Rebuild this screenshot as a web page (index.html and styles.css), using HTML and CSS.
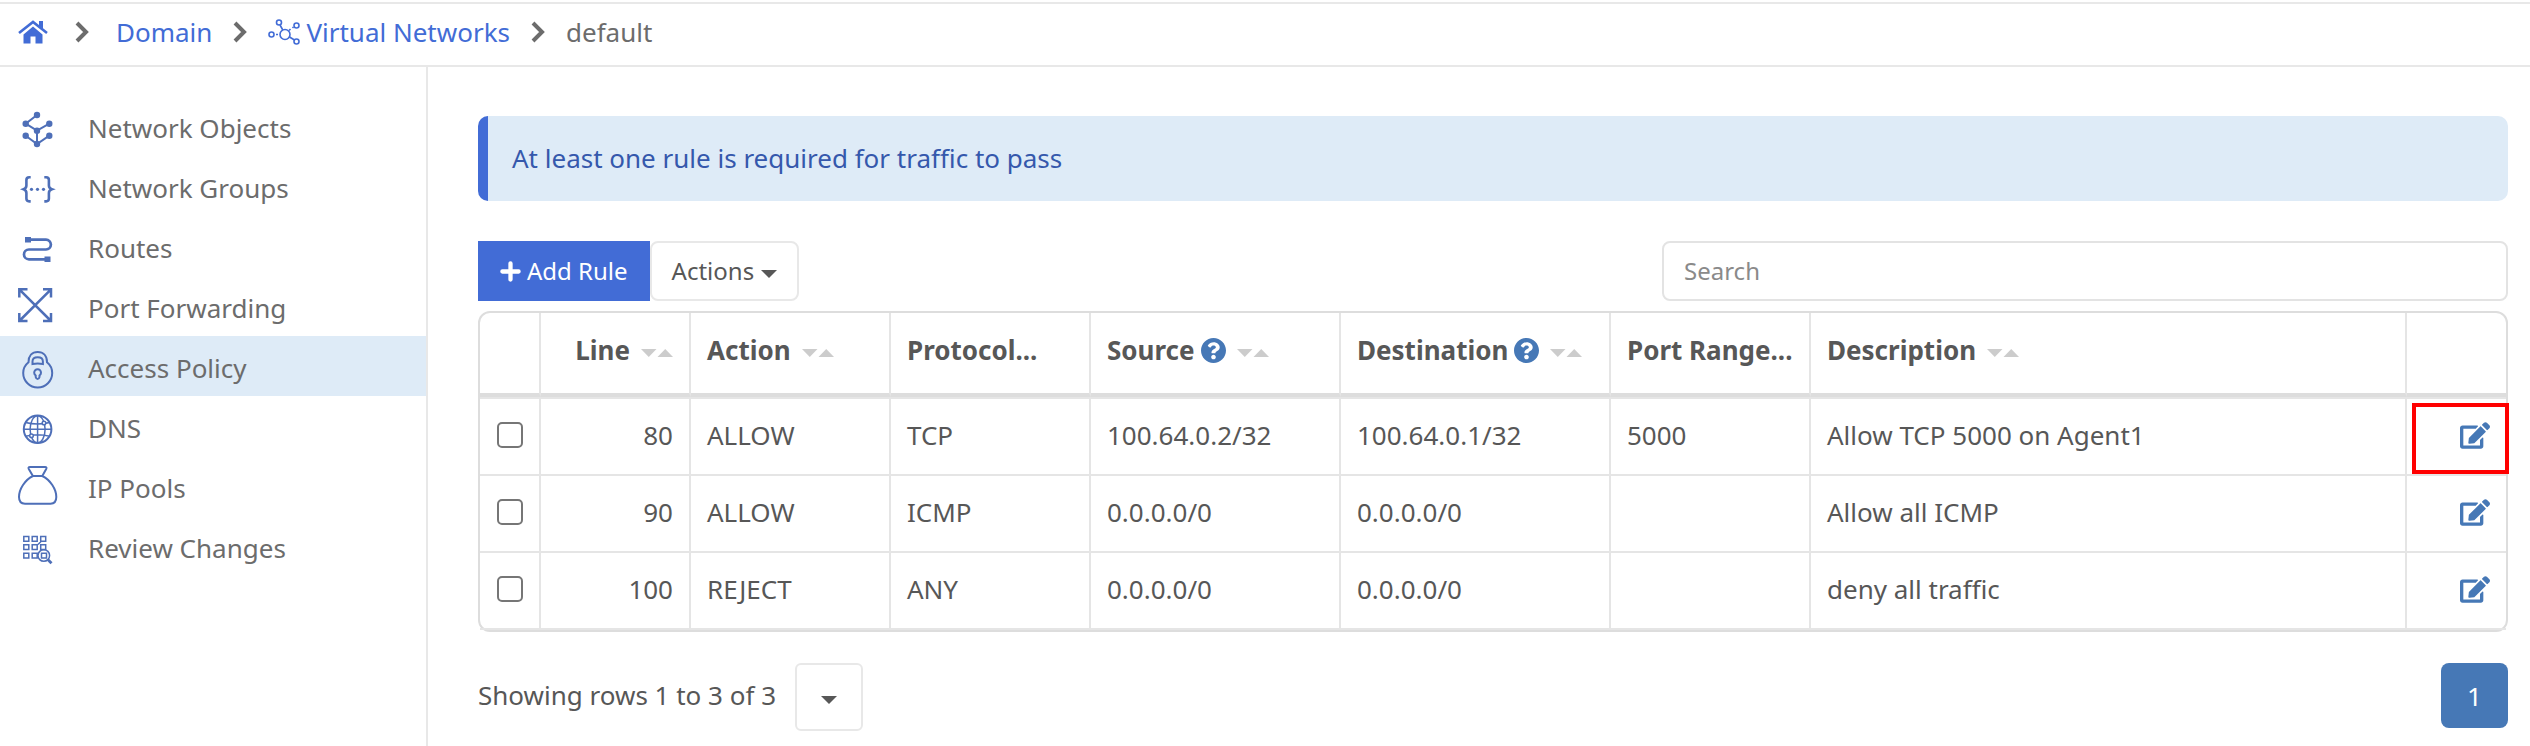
FILE: index.html
```html
<!DOCTYPE html>
<html lang="en">
<head>
<meta charset="utf-8">
<title>Access Policy</title>
<link rel="stylesheet" href="styles.css">
</head>
<body>
<svg class="defs" aria-hidden="true">
  <symbol id="chevron" viewBox="0 0 14 22"><path d="M2 2l9 9-9 9" fill="none" stroke="currentColor" stroke-width="4"/></symbol>
  <symbol id="edit" viewBox="0 0 576 512"><path fill="currentColor" d="M402.600 83.200l90.200 90.200c3.800 3.800 3.800 10 0 13.800L274.400 405.600l-92.800 10.300c-12.400 1.400-22.900-9.100-21.500-21.500l10.300-92.800L388.800 83.200c3.800-3.800 10-3.800 13.800 0zm162-22.900l-48.800-48.800c-15.200-15.200-39.900-15.200-55.200 0l-35.400 35.400c-3.800 3.800-3.800 10 0 13.800l90.200 90.200c3.800 3.800 10 3.800 13.800 0l35.400-35.400c15.200-15.300 15.200-40 0-55.200zM384 346.200V448H64V128h229.800c3.200 0 6.200-1.300 8.500-3.500l40-40c7.600-7.600 2.200-20.500-8.500-20.500H48C21.500 64 0 85.500 0 112v352c0 26.500 21.500 48 48 48h352c26.500 0 48-21.500 48-48V306.200c0-10.700-12.900-16-20.500-8.500l-40 40c-2.200 2.300-3.500 5.300-3.500 8.500z"/></symbol>
  <symbol id="sort" viewBox="0 0 32 8"><path fill="currentColor" d="M0 0h15.500l-7.750 8zM16.500 8h15.500l-7.750-8z"/></symbol>
  <symbol id="help" viewBox="8 8 496 496"><path fill="currentColor" d="M504 256c0 136.997-111.043 248-248 248S8 392.997 8 256C8 119.083 119.043 8 256 8s248 111.083 248 248zM262.655 90c-54.497 0-89.255 22.957-116.549 63.758-3.536 5.286-2.353 12.415 2.715 16.258l34.699 26.310c5.205 3.947 12.621 3.008 16.665-2.122 17.864-22.658 30.113-35.797 57.303-35.797 20.429 0 45.698 13.148 45.698 32.958 0 14.976-12.363 22.667-32.534 33.976C247.128 238.528 216 254.941 216 296v4c0 6.627 5.373 12 12 12h56c6.627 0 12-5.373 12-12v-1.333c0-28.462 83.186-29.647 83.186-106.667 0-58.002-60.165-102-116.531-102zM256 338c-25.365 0-46 20.635-46 46 0 25.364 20.635 46 46 46s46-20.636 46-46c0-25.365-20.635-46-46-46z"/></symbol>
</svg>

<nav class="crumbs" aria-label="Breadcrumb">
  <a href="#" aria-label="Home" class="home"><svg viewBox="0 0 30 24" width="30" height="24"><path fill="currentColor" d="M15 6.500l9.500 8V23.500h-7v-7h-5v7H5.500V14.500z"/><path d="M1 13L15 2l14 11" fill="none" stroke="currentColor" stroke-width="2.600"/><path fill="currentColor" d="M21 1h4v8l-4-3z"/></svg></a>
  <svg class="chevron"><use href="#chevron"/></svg>
  <a href="#">Domain</a>
  <svg class="chevron"><use href="#chevron"/></svg>
  <a href="#" class="networks"><svg viewBox="0 0 32 26" width="32" height="26" fill="none" stroke="currentColor" stroke-width="1.600"><circle cx="17" cy="15.500" r="5"/><circle cx="11" cy="3.500" r="2.500"/><circle cx="3.500" cy="15.500" r="2.500"/><circle cx="28.500" cy="6.500" r="2.500"/><circle cx="28.500" cy="22.500" r="2.500"/><path d="M12 6l2.800 5M8 15.500h2M21 11.500l1.500-1.500M24.500 9l1-1M21.500 18l5 3"/></svg>Virtual Networks</a>
  <svg class="chevron"><use href="#chevron"/></svg>
  <span>default</span>
</nav>

<div class="layout">
  <nav class="sidebar" aria-label="Network">
    <a href="#"><svg viewBox="0 0 40 40"><path d="M19 7L7.700 15.700l11.300 7 12.300-7M19 22.700V36M7.700 27.700L19 36l12.300-8.300" stroke="currentColor" stroke-width="2" fill="none"/><g fill="currentColor"><circle cx="19" cy="7" r="3.200"/><circle cx="7.700" cy="15.700" r="3.200"/><circle cx="31.300" cy="15.700" r="3.200"/><circle cx="19" cy="22.700" r="3.200"/><circle cx="7.700" cy="27.700" r="3.200"/><circle cx="31.300" cy="27.700" r="3.200"/><circle cx="19" cy="36" r="3.200"/></g></svg>Network Objects</a>
    <a href="#"><svg viewBox="0 0 40 40"><path d="M12.700 9.200h-1.500q-2.800 0-2.800 2.800v5.500q0 2.800-2.700 3.800q2.700 1 2.700 3.800v5.500q0 2.800 2.800 2.800h1.500M26.300 9.200h1.800q2.800 0 2.800 2.800v5.500q0 2.800 2.900 3.800q-2.900 1-2.900 3.800v5.500q0 2.800-2.800 2.800h-1.800" fill="none" stroke="currentColor" stroke-width="2.600"/><g fill="currentColor"><circle cx="13.500" cy="21.300" r="1.600"/><circle cx="19.500" cy="21.300" r="1.600"/><circle cx="25.500" cy="21.300" r="1.600"/></g></svg>Network Groups</a>
    <a href="#"><svg viewBox="0 0 40 40"><path d="M10 11.700h18a4.900 4.900 0 0 1 0 9.800H10.900a4.900 4.900 0 0 0 0 9.800H30" fill="none" stroke="currentColor" stroke-width="2.700"/><path fill="currentColor" d="M7 9h6v5.500H7zM26.500 28.500h6V34h-6z"/></svg>Routes</a>
    <a href="#"><svg viewBox="0 0 40 40"><path d="M1.300 1.300l31.700 31.700M33 1.300L1.300 33M1.300 9.500V1.300h8.200M25 1.300h8V9.500M1.300 25v8h8.200M25 33h8v-8" fill="none" stroke="currentColor" stroke-width="2.500"/></svg>Port Forwarding</a>
    <a href="#" class="active" aria-current="page"><svg viewBox="0 0 40 40" fill="none" stroke="currentColor" stroke-width="2"><path d="M10.500 14.200C10.500 8 14 4 19.700 4S29 8 29 14.200q5.200 4.300 5.200 10.800a14.500 14.500 0 0 1-29 0q0-6.500 5.300-10.800z"/><path d="M14.500 16v-2.500q0-4.300 5.200-4.300t5.200 4.300V16q-5.200-1-10.400 0z"/><path d="M17.700 27.500q-1.500-1.200-1.500-2.800a3.400 3.400 0 0 1 6.800 0q0 1.600-1.500 2.800v1.500q-.5 2-1.900 2t-1.900-2z"/></svg>Access Policy</a>
    <a href="#"><svg viewBox="0 0 40 40" fill="none" stroke="currentColor" stroke-width="1.500"><circle cx="19.600" cy="21.300" r="13.800" stroke-width="2"/><ellipse cx="19.600" cy="21.300" rx="7.500" ry="13.500"/><path d="M19.600 7.500v27.600M5.800 21.300h27.600M7.500 14.500q12 3 24.200 0M7.500 28.300q12-3 24.200 0"/><circle cx="26" cy="15" r="1.800" fill="#fff"/><circle cx="13.500" cy="27.800" r="1.800" fill="#fff"/></svg>DNS</a>
    <a href="#"><svg viewBox="0 0 40 40" fill="none" stroke="currentColor" stroke-width="2"><path d="M12-1h15q2.200 0 1.200 2L24.300 8h-9.400L10.800 1q-1-2 1.200-2zM14.900 8C7 12 1 21 1 29q0 6.700 6 6.700h25.500q5.800 0 5.800-6.700c0-8-6-17-14-21"/></svg>IP Pools</a>
    <a href="#"><svg viewBox="0 0 40 40" fill="none" stroke="currentColor" stroke-width="1.500"><path d="M5.800 8.500h5v4.700h-5zM14.200 8.500h5v4.700h-5zM22.700 8.500h5v4.700h-5zM5.800 16.800h5v4.700h-5zM14.200 16.800h5v4.700h-5zM22.700 16.800h5v4.700h-5zM5.800 25.200h5v4.700h-5zM14.200 25.200h5v4.700h-5zM23.500 25.200h5v4.700h-5zM20 16.500l3-3"/><circle cx="25.800" cy="27.500" r="5.800"/><path d="M29.800 31.500l3.700 3.700" stroke-width="2.800"/></svg>Review Changes</a>
  </nav>

  <main class="content">
    <p class="alert">At least one rule is required for traffic to pass</p>
    <div class="toolbar">
      <button class="add" type="button"><svg viewBox="0 0 22 22" width="21" height="21"><path d="M11 2.500v17M2.500 11h17" stroke="currentColor" stroke-width="4.500" stroke-linecap="round"/></svg>Add Rule</button>
      <button class="actions" type="button">Actions<i class="caret"></i></button>
      <input class="search" type="search" placeholder="Search" aria-label="Search">
    </div>

    <div class="frame">
    <table>
      <colgroup><col class="w-check"><col class="w-line"><col class="w-mid"><col class="w-mid"><col class="w-source"><col class="w-dest"><col class="w-mid"><col><col class="w-edit"></colgroup>
      <thead>
        <tr>
          <th></th>
          <th class="num">Line<svg class="sort"><use href="#sort"/></svg></th>
          <th>Action<svg class="sort"><use href="#sort"/></svg></th>
          <th>Protocol...</th>
          <th>Source<svg class="help"><use href="#help"/></svg><svg class="sort"><use href="#sort"/></svg></th>
          <th>Destination<svg class="help"><use href="#help"/></svg><svg class="sort"><use href="#sort"/></svg></th>
          <th>Port Range...</th>
          <th>Description<svg class="sort"><use href="#sort"/></svg></th>
          <th></th>
        </tr>
      </thead>
      <tbody>
        <tr>
          <td class="check"><input type="checkbox" aria-label="Select line 80"></td>
          <td class="num">80</td><td>ALLOW</td><td>TCP</td><td>100.64.0.2/32</td><td>100.64.0.1/32</td><td>5000</td><td>Allow TCP 5000 on Agent1</td>
          <td class="edit marked"><button type="button" aria-label="Edit line 80"><svg><use href="#edit"/></svg></button></td>
        </tr>
        <tr>
          <td class="check"><input type="checkbox" aria-label="Select line 90"></td>
          <td class="num">90</td><td>ALLOW</td><td>ICMP</td><td>0.0.0.0/0</td><td>0.0.0.0/0</td><td></td><td>Allow all ICMP</td>
          <td class="edit"><button type="button" aria-label="Edit line 90"><svg><use href="#edit"/></svg></button></td>
        </tr>
        <tr>
          <td class="check"><input type="checkbox" aria-label="Select line 100"></td>
          <td class="num">100</td><td>REJECT</td><td>ANY</td><td>0.0.0.0/0</td><td>0.0.0.0/0</td><td></td><td>deny all traffic</td>
          <td class="edit"><button type="button" aria-label="Edit line 100"><svg><use href="#edit"/></svg></button></td>
        </tr>
      </tbody>
    </table>
    </div>

    <div class="footer">
      <span>Showing rows 1 to 3 of 3</span>
      <button class="size" type="button" aria-label="Rows per page"><i class="caret"></i></button>
      <button class="page" type="button" aria-current="page">1</button>
    </div>
  </main>
</div>
</body>
</html>
```

FILE: styles.css
```css
*, *::after { box-sizing: border-box; }
body { margin: 0; padding-top: 2px; background: #fff; color: #575757; font: 26px/36px "Noto Sans", "Open Sans", sans-serif; min-height: 100vh; display: flex; flex-direction: column; }
a { color: inherit; text-decoration: none; }
button, input { font: inherit; color: inherit; margin: 0; }
button { padding: 0; background: none; border: 0; }
svg { display: block; flex: none; }
.defs { position: absolute; width: 0; height: 0; }

.crumbs { display: flex; align-items: center; height: 65px; padding: 0 18px 6px; border-top: 2px solid #e8e8e8; border-bottom: 2px solid #e8e8e8; color: #6c6c6c; }
.crumbs a { color: #426cd6; }
.networks { display: flex; align-items: center; gap: 6px; }
.chevron { width: 14px; height: 22px; margin: 0 21px; }
.home + .chevron { margin: 0 27px; }

.layout { display: flex; flex: 1; }
.sidebar { width: 428px; flex: none; padding-top: 29px; border-right: 2px solid #e8e8e8; color: #6c6c6c; }
.sidebar a { display: flex; align-items: center; height: 60px; padding: 4px 0 0 18px; gap: 30px; }
.sidebar svg { width: 40px; height: 40px; color: #4e6fb8; overflow: visible; }
.sidebar .active { background: #deebf7; }

.content { flex: 1; min-width: 0; padding: 49px 22px 0 50px; }
.alert { margin: 0 0 40px; padding: 24px; line-height: 37px; background: #deebf7; color: #3558ac; border-left: 10px solid #426cd6; border-radius: 10px; }
.toolbar { display: flex; height: 60px; margin-bottom: 10px; font-size: 24px; }
.add { display: flex; align-items: center; gap: 6px; padding: 0 22px; background: #426cd6; color: #fff; }
.actions { display: flex; align-items: center; gap: 7px; padding: 0 20px; border: 2px solid #e8e8e8; border-radius: 8px; }
.caret { margin-top: 6px; border: 8px solid transparent; border-top-color: currentColor; border-bottom: 0; }
.search { width: 846px; margin-left: auto; padding: 0 20px; border: 2px solid #e3e3e3; border-radius: 8px; background: #fff; }
.search::placeholder { color: #8a8a8a; opacity: 1; }

.frame { border: 2px solid #ddd; border-radius: 12px; }
table { width: 100%; table-layout: fixed; border-collapse: separate; border-spacing: 0; }
.w-check { width: 61px; }
.w-line { width: 150px; }
.w-mid { width: 200px; }
.w-source { width: 250px; }
.w-dest { width: 270px; }
.w-edit { width: 99px; }
th, td { padding: 0 16px; text-align: left; border-right: 2px solid #e5e5e5; white-space: nowrap; }
th:last-child, td:last-child { border-right: 0; }
th { height: 84px; padding-bottom: 6px; border-bottom: 4px solid #ddd; font-weight: 700; }
td { height: 77px; padding-bottom: 3px; border-bottom: 2px solid #e5e5e5; }
.num { text-align: right; }
th svg { display: inline-block; }
.sort { width: 32px; height: 8px; margin-left: 11px; color: #ccc; vertical-align: 3px; }
.help { width: 25px; height: 25px; margin-left: 6px; color: #4678b6; vertical-align: -3px; }
tbody tr:first-child td { height: 79px; border-top: 2px solid #e5e5e5; }
.check { padding-left: 17px; }
.check input { display: block; appearance: none; width: 26px; height: 26px; border: 2px solid #767676; border-radius: 5px; background: #fff; }
.edit svg { width: 30px; height: 27px; }
.edit button { display: block; margin-left: auto; color: #4678b6; }
.marked { position: relative; }
.marked::after { content: ""; position: absolute; top: 4px; right: -3px; width: 97px; height: 71px; border: 4px solid #f00; }

.footer { display: flex; align-items: center; gap: 19px; margin-top: 31px; }
.footer span { padding-bottom: 4px; }
.size { display: grid; place-items: center; width: 68px; height: 68px; border: 2px solid #e8e8e8; border-radius: 6px; }
.page { width: 67px; height: 65px; margin-left: auto; border-radius: 8px; background: #4678b6; color: #fff; align-self: flex-start; }
```
